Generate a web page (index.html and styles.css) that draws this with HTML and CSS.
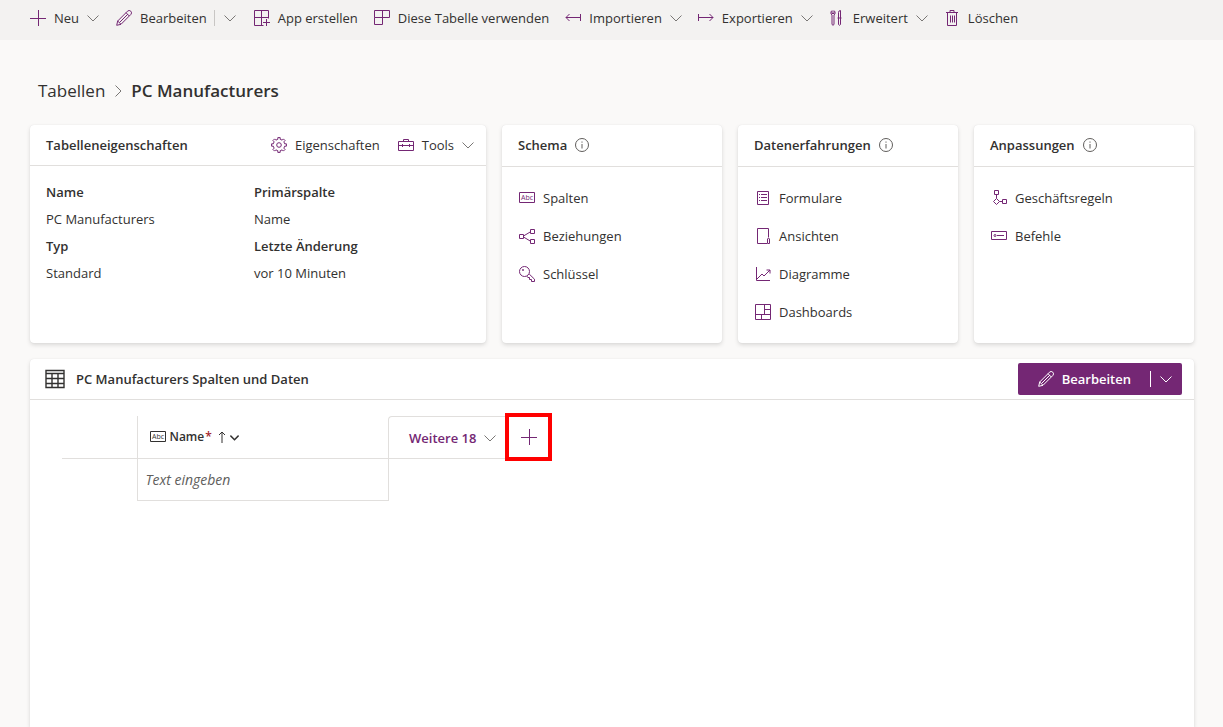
FILE: index.html
```html
<!DOCTYPE html>
<html lang="de">
  <head>
    <meta charset="utf-8" />
    <title>PC Manufacturers</title>
    <link rel="stylesheet" href="styles.css">
  </head>
  <body>
    <!-- icons -->
    <svg class="sprite" aria-hidden="true">
      <symbol id="plus" viewBox="0 0 16 16"><path d="M8.500 0v16M0 8.500h16" /></symbol>
      <symbol id="chevron" viewBox="0 0 12 12"><path d="M.5 3.500L6 9l5.500-5.500" /></symbol>
      <symbol id="pencil" viewBox="0 0 16 16"><path d="M.7 15.300l1-4.300L11.500 1.200a2.300 2.300 0 0 1 3.300 3.300L5 14.300zM10 2.700L13.300 6M1.700 11L5 14.300M12 4L3.500 12.500" /></symbol>
      <symbol id="app" viewBox="0 0 16 16"><path d="M9.500 15.500h-9v-15h14v8M.5 7.500h14M7.500.5v15M12.500 9v7M9 12.500h7" /></symbol>
      <symbol id="use-table" viewBox="0 0 16 16"><path d="M.5.500h15v7H.5zM.5 7.500v7h8v-14" /></symbol>
      <symbol id="import" viewBox="0 0 16 16"><path d="M15.500 4v7M15 7.500H1M4.500 4L1 7.500 4.500 11" /></symbol>
      <symbol id="export" viewBox="0 0 16 16"><path d="M.5 4v7M1 7.500h14M11.500 4L15 7.500 11.500 11" /></symbol>
      <symbol id="advanced" viewBox="0 0 16 16"><path d="M3 .7C1.500 1.700 1.500 4 3 5v9.500q1 1.500 2 0V5c1.500-1 1.500-3.300 0-4.300v2.800H3zM9.500 8V2.500q0-2 2-2v7.500M8.500 8h4M9.500 8v6.500q1 1.500 2 0V8" /></symbol>
      <symbol id="trash" viewBox="0 0 16 16"><path d="M2 2.500h12M3.500 3v12.500h9V3M6 2.500v-2h4v2M6.500 5.500v7M8.500 5.500v7M10.500 5.500v7" /></symbol>
      <symbol id="gear" viewBox="0 0 16 16"><path d="M13.670 6.800L15.400 6.800 15.400 9.200 13.670 9.200 12.860 11.160 14.080 12.380 12.380 14.080 11.160 12.860 9.200 13.670 9.200 15.400 6.800 15.400 6.800 13.670 4.840 12.860 3.620 14.080 1.920 12.380 3.140 11.160 2.330 9.200 .6 9.200 .6 6.800 2.330 6.800 3.140 4.840 1.920 3.620 3.620 1.920 4.840 3.140 6.800 2.330 6.800 .6 9.200 .6 9.200 2.330 11.160 3.140 12.380 1.920 14.080 3.620 12.860 4.840z" /><circle cx="8" cy="8" r="2.300" /></symbol>
      <symbol id="toolbox" viewBox="0 0 16 16"><path d="M.5 4.500h15v9H.5zM5.500 4V2.500h5V4M.5 8.500h15M4.500 7v3M11.500 7v3" /></symbol>
      <symbol id="info" viewBox="0 0 14 14"><circle cx="7" cy="7" r="6.500" /><path d="M7 6v4.500M7 3.500v1.200" /></symbol>
      <symbol id="relations" viewBox="0 0 16 16"><path d="M.5 6.500h4v4h-4zM11.500 1.500h4v4h-4zM11.500 11.500h4v4h-4zM4.500 8l7-4.200M4.500 9l7 4.200" /></symbol>
      <symbol id="key" viewBox="0 0 16 16"><path d="M10.200 8l5.300 5.200v2.300h-3v-2h-2v-2H8.800L8 10.200" /><circle cx="5.500" cy="5.500" r="5" /><circle cx="4" cy="4" r=".6" /></symbol>
      <symbol id="form" viewBox="0 0 16 16"><path d="M2.500 1.500h11v13h-11zM6 4.500h6M6 7.500h6M6 10.500h6M4 4.500h1M4 7.500h1M4 10.500h1" /></symbol>
      <symbol id="view" viewBox="0 0 16 16"><path d="M13.500 9.500V.5h-11v15h9.500M12.500 15.500V11l1-1 1 1v4.500z" /></symbol>
      <symbol id="chart" viewBox="0 0 16 16"><path d="M1.500 1v13.500H15M2 13l5-5 2 2 6-6M11.500 4H15v3.500" /></symbol>
      <symbol id="dashboard" viewBox="0 0 16 16"><path d="M.5.500h15v15H.5zM.5 10.500h15M9.500.5v10M9.500 5.500h6M6.500 10.500v5" /></symbol>
      <symbol id="rule" viewBox="0 0 16 16"><path d="M3.500.500h4v4h-4zM5.500 4.500v4M5.500 8.500l3 3-3 3-3-3zM8.500 11.500h3M11.500 9.500h4v4h-4z" /></symbol>
      <symbol id="command" viewBox="0 0 16 16"><path d="M.5 3.500h15v8H.5zM6 7.500h7" /><circle cx="4" cy="7.500" r="1" /></symbol>
      <symbol id="grid" viewBox="0 0 20 20"><path d="M1 1.500h18v17H1zM1 4.500h18M1 9.500h18M1 14.500h18M7 4.500v14M13 4.500v14" /></symbol>
      <symbol id="arrow-up" viewBox="0 0 8 12"><path d="M4 12V1M1 4l3-3 3 3" /></symbol>
    </svg>

    <div class="commandBar">
      <button><svg class="icon"><use href="#plus" /></svg>Neu<svg class="chevron"><use href="#chevron" /></svg></button>
      <div class="split">
        <button><svg class="icon"><use href="#pencil" /></svg>Bearbeiten</button>
        <button class="more" aria-label="Weitere Optionen"><svg class="chevron"><use href="#chevron" /></svg></button>
      </div>
      <button><svg class="icon"><use href="#app" /></svg>App erstellen</button>
      <button><svg class="icon"><use href="#use-table" /></svg>Diese Tabelle verwenden</button>
      <button><svg class="icon"><use href="#import" /></svg>Importieren<svg class="chevron"><use href="#chevron" /></svg></button>
      <button><svg class="icon"><use href="#export" /></svg>Exportieren<svg class="chevron"><use href="#chevron" /></svg></button>
      <button><svg class="icon"><use href="#advanced" /></svg>Erweitert<svg class="chevron"><use href="#chevron" /></svg></button>
      <button><svg class="icon"><use href="#trash" /></svg>Löschen</button>
    </div>

    <main>
      <nav class="breadcrumb">
        <a href="#">Tabellen</a>
        <svg class="chevron next"><use href="#chevron" /></svg>
        <h1>PC Manufacturers</h1>
      </nav>

      <div class="cards">
        <section class="card properties">
          <header>
            <h2>Tabelleneigenschaften</h2>
            <button><svg class="icon"><use href="#gear" /></svg>Eigenschaften</button>
            <button><svg class="icon"><use href="#toolbox" /></svg>Tools<svg class="chevron"><use href="#chevron" /></svg></button>
          </header>
          <div class="facts">
            <dl>
              <dt>Name</dt>
              <dd>PC Manufacturers</dd>
              <dt>Typ</dt>
              <dd>Standard</dd>
            </dl>
            <dl>
              <dt>Primärspalte</dt>
              <dd>Name</dd>
              <dt>Letzte Änderung</dt>
              <dd>vor 10 Minuten</dd>
            </dl>
          </div>
        </section>

        <section class="card">
          <header><h2>Schema</h2><svg class="info"><use href="#info" /></svg></header>
          <ul>
            <li><a href="#"><svg class="icon" viewBox="0 0 16 16"><path d="M.5 2.500h15v10H.5z" /><text x="2" y="10">Abc</text></svg>Spalten</a></li>
            <li><a href="#"><svg class="icon"><use href="#relations" /></svg>Beziehungen</a></li>
            <li><a href="#"><svg class="icon"><use href="#key" /></svg>Schlüssel</a></li>
          </ul>
        </section>

        <section class="card">
          <header><h2>Datenerfahrungen</h2><svg class="info"><use href="#info" /></svg></header>
          <ul>
            <li><a href="#"><svg class="icon"><use href="#form" /></svg>Formulare</a></li>
            <li><a href="#"><svg class="icon"><use href="#view" /></svg>Ansichten</a></li>
            <li><a href="#"><svg class="icon"><use href="#chart" /></svg>Diagramme</a></li>
            <li><a href="#"><svg class="icon"><use href="#dashboard" /></svg>Dashboards</a></li>
          </ul>
        </section>

        <section class="card">
          <header><h2>Anpassungen</h2><svg class="info"><use href="#info" /></svg></header>
          <ul>
            <li><a href="#"><svg class="icon"><use href="#rule" /></svg>Geschäftsregeln</a></li>
            <li><a href="#"><svg class="icon"><use href="#command" /></svg>Befehle</a></li>
          </ul>
        </section>
      </div>

      <section class="card data">
        <header>
          <svg class="gridIcon"><use href="#grid" /></svg>
          <h2>PC Manufacturers Spalten und Daten</h2>
          <div class="primary">
            <button><svg class="icon"><use href="#pencil" /></svg>Bearbeiten</button>
            <button class="more" aria-label="Weitere Optionen"><svg class="chevron"><use href="#chevron" /></svg></button>
          </div>
        </header>
        <table>
          <thead>
            <tr>
              <th class="rowHead"></th>
              <th class="nameCol">
                <button><svg class="icon" viewBox="0 0 16 16"><path d="M.5 2.500h15v10H.5z" /><text x="2" y="10">Abc</text></svg><span>Name<span class="required">*</span></span><svg class="arrow"><use href="#arrow-up" /></svg><svg class="sort"><use href="#chevron" /></svg></button>
              </th>
              <th class="moreCol">
                <div class="tab">
                  <button class="moreColumns">Weitere 18<svg class="chevron"><use href="#chevron" /></svg></button>
                  <button class="addColumn" aria-label="Neue Spalte"><svg class="icon"><use href="#plus" /></svg></button>
                </div>
              </th>
            </tr>
          </thead>
          <tbody>
            <tr>
              <td></td>
              <td class="nameCell"><input type="text" placeholder="Text eingeben" aria-label="Name" /></td>
              <td></td>
            </tr>
          </tbody>
        </table>
      </section>
    </main>
  </body>
</html>
```
FILE: styles.css
```css
* {
  box-sizing: border-box;
}
body {
  margin: 0;
  min-height: 100vh;
  display: flex;
  flex-direction: column;
  background-color: #faf9f8;
  color: #323130;
  font-family: "Open Sans", "Noto Sans", sans-serif;
  font-size: 13px;
  line-height: 20px;
}
h1,
h2,
ul,
dl,
dd {
  margin: 0;
  padding: 0;
}
button {
  display: flex;
  align-items: center;
  gap: 8px;
  padding: 0;
  border: none;
  background: none;
  color: inherit;
  font: inherit;
  white-space: nowrap;
  cursor: pointer;
}
a {
  color: inherit;
  text-decoration: none;
}

/* icons */
svg {
  flex: none;
  fill: none;
  stroke: #742774;
}
svg text {
  fill: #742774;
  stroke: none;
  font-size: 7px;
  font-weight: 400;
}
.sprite {
  position: absolute;
  width: 0;
  height: 0;
}
.icon {
  width: 16px;
  height: 16px;
}
.chevron {
  width: 12px;
  height: 12px;
  stroke: #797775;
}
.info {
  width: 14px;
  height: 14px;
  stroke: #605e5c;
}

.commandBar {
  display: flex;
  gap: 16px;
  height: 40px;
  padding: 0 30px 4px;
  background-color: #f3f2f1;
}
.split {
  display: flex;
  align-items: center;
  gap: 7px;
  margin: 0 2px 0 1px;
}
.split .more {
  height: 16px;
  padding-left: 9px;
  border-left: 1px solid #c8c6c4;
}

main {
  flex: 1;
  display: flex;
  flex-direction: column;
  padding: 0 29px 0 30px;
}
.breadcrumb {
  display: flex;
  align-items: center;
  gap: 7px;
  height: 85px;
  padding: 16px 8px 0;
  font-size: 17px;
}
.breadcrumb h1 {
  font-size: 17px;
  font-weight: 600;
}
.next {
  transform: rotate(-90deg);
}

.cards {
  display: grid;
  grid-template-columns: 456fr 220fr 220fr 220fr;
  gap: 16px;
}
.card {
  border-radius: 4px;
  background-color: #fff;
  box-shadow: 0 2px 4px rgba(0, 0, 0, 0.13), 0 0 1px rgba(0, 0, 0, 0.11);
}
.card header {
  display: flex;
  align-items: center;
  gap: 8px;
  height: 42px;
  padding: 0 16px 2px;
  border-bottom: 1px solid #e1dfdd;
}
.card h2 {
  font-size: 13px;
  font-weight: 600;
}
.card ul {
  padding: 12px 17px;
  list-style: none;
}
.card li a {
  display: flex;
  align-items: center;
  gap: 8px;
  height: 38px;
}

.card.properties header {
  gap: 18px;
  height: 41px;
  padding: 0 12px 0 16px;
}
.properties h2 {
  flex: 1;
}
.facts {
  display: flex;
  padding: 13px 16px;
  line-height: 27px;
}
.facts dl {
  width: 208px;
}
dt {
  font-weight: 600;
}

.data {
  flex: 1;
  margin-top: 16px;
  border-radius: 4px 4px 0 0;
}
.card.data header {
  gap: 11px;
  height: 41px;
  padding: 0 12px 0 15px;
}
.data h2 {
  flex: 1;
}
.gridIcon {
  width: 20px;
  height: 20px;
  stroke: #323130;
  stroke-width: 1.4;
}
.primary {
  display: flex;
  align-items: center;
  height: 32px;
  padding: 0 10px 0 20px;
  border-radius: 2px;
  background-color: #742774;
  color: #fff;
  font-weight: 600;
}
.primary svg {
  stroke: #fff;
}
.primary .more {
  height: 16px;
  margin-left: 19px;
  padding-left: 9px;
  border-left: 1px solid #fff;
}

table {
  margin: 16px 32px;
  border-collapse: collapse;
}
th,
td {
  height: 42px;
  padding: 0;
  font-weight: 600;
  text-align: left;
}
th {
  border-bottom: 1px solid #e1dfdd;
}
.rowHead {
  width: 75px;
}
.nameCol {
  width: 251px;
  padding-left: 12px;
  border-left: 1px solid #e1dfdd;
  font-size: 12px;
}
.nameCol button {
  gap: 4px;
}
.nameCol .icon,
.arrow,
.sort {
  stroke: #323130;
}
.nameCol text {
  fill: #323130;
}
.required {
  margin: 0 2px 0 1px;
  color: #a4262c;
}
.arrow {
  width: 8px;
  height: 12px;
}
.sort {
  width: 9px;
  height: 9px;
  stroke-width: 2;
}
.tab {
  display: flex;
  height: 42px;
  padding-left: 20px;
  border-top: 1px solid #e1dfdd;
  border-left: 1px solid #e1dfdd;
  border-radius: 4px 0 0 0;
}
.moreColumns {
  padding-right: 13px;
  color: #742774;
}
.addColumn {
  justify-content: center;
  width: 39px;
  height: 40px;
  box-shadow: 0 0 0 4px #f00;
}
.nameCell {
  border: 1px solid #e1dfdd;
}
input {
  width: 100%;
  padding: 0 8px;
  border: none;
  outline: none;
  background: none;
  font: inherit;
  font-size: 14px;
  font-weight: 400;
}
input::placeholder {
  color: #605e5c;
  font-style: italic;
}
```
